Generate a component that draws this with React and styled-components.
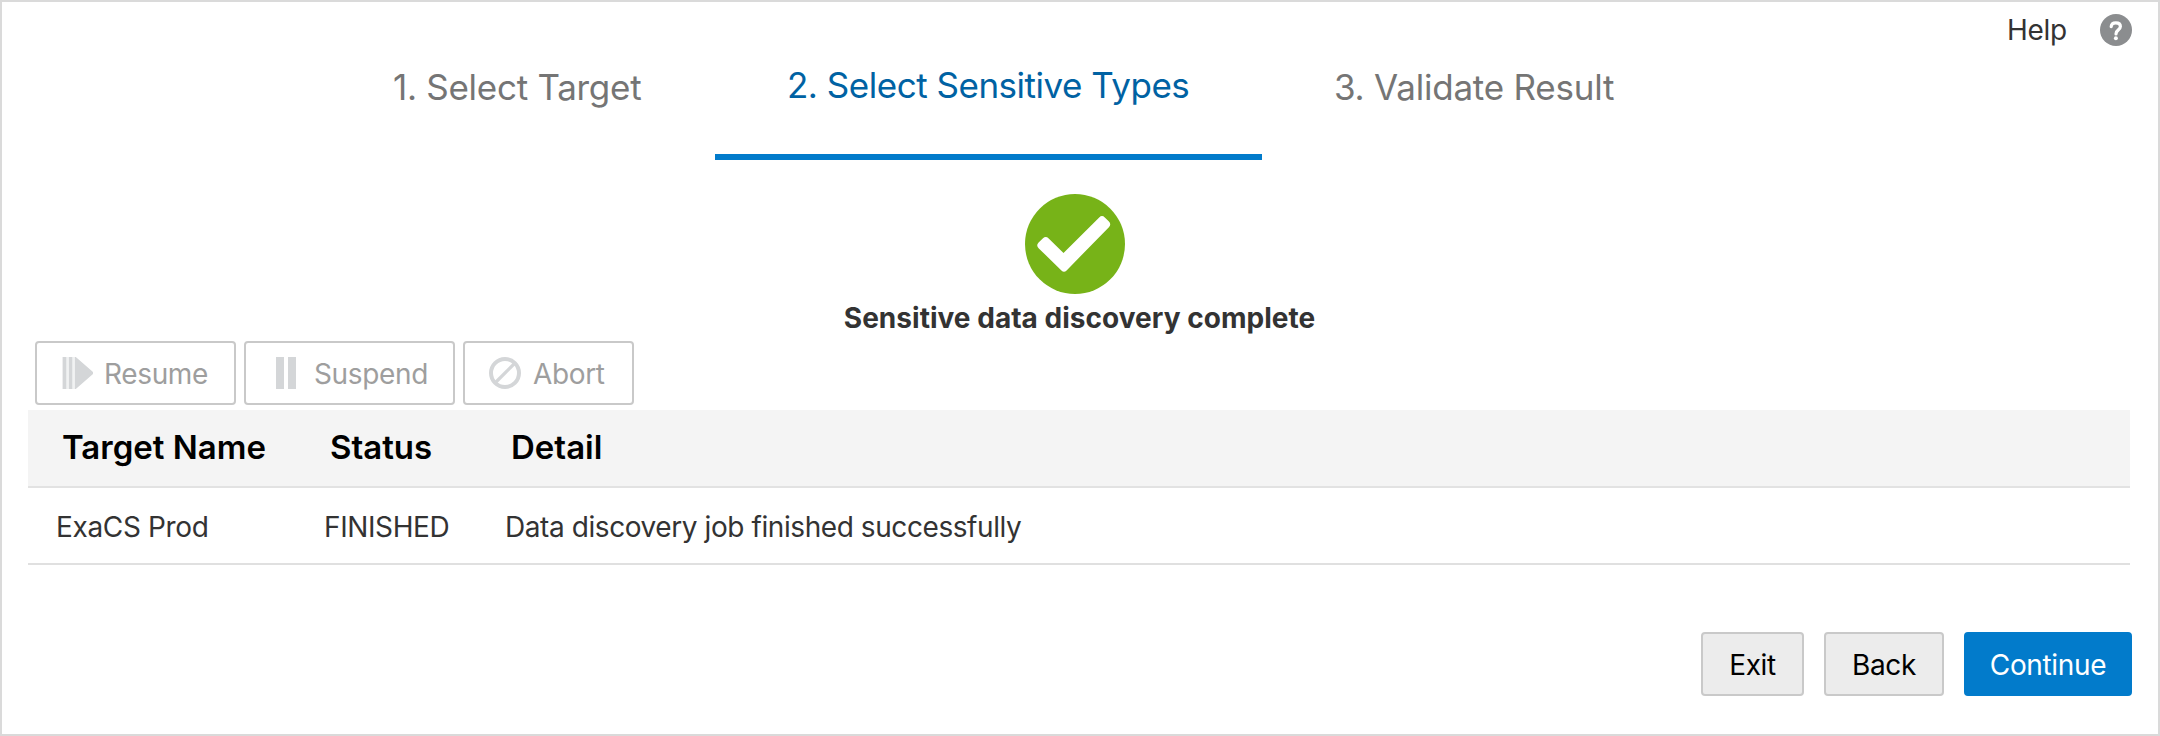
import React from 'react';
import styled, { createGlobalStyle } from 'styled-components';

const GlobalStyle = createGlobalStyle`
  *, *::before, *::after { box-sizing: border-box; }
  body { margin: 0; background: #fff; }
  button { font: inherit; margin: 0; }
`;

const Frame = styled.main`
  width: 2160px;
  height: 736px;
  border: 2px solid #dadada;
  background: #fff;
  color: #333;
  font: 400 28px/32px Inter, 'Liberation Sans', sans-serif;
  white-space: nowrap;
`;

const TopBar = styled.header`
  display: flex;
  justify-content: flex-end;
  gap: 33px;
  padding: 12px 26px 0 0;
`;

const HelpLabel = styled.span`
  letter-spacing: -0.25px;
`;

const Icon = styled.svg`
  display: block;
  flex: none;
  overflow: visible;
`;

const Steps = styled.nav`
  display: flex;
  height: 114px;
  padding-left: 319px;
`;

const Step = styled.div`
  width: ${(p) => p.$width}px;
  padding: ${(p) => (p.$active ? 18 : 20)}px 0 0 72px;
  border-bottom: 6px solid ${(p) => (p.$active ? '#027bcb' : 'transparent')};
  color: ${(p) => (p.$active ? '#0062a3' : '#757575')};
  font-size: 35px;
  line-height: 42px;
  letter-spacing: ${(p) => p.$tracking}px;
`;

const Outcome = styled.section`
  display: flex;
  flex-direction: column;
  align-items: center;
  gap: 6px;
  padding-top: 34px;
`;

const OutcomeIcon = styled(Icon)`
  margin-right: 10px;
`;

const OutcomeText = styled.strong`
  font-weight: 700;
  line-height: 36px;
  letter-spacing: 0.03px;
  padding-right: 1px;
`;

const Toolbar = styled.div`
  display: flex;
  gap: 8px;
  padding: 5px 0 5px 33px;
`;

const ToolButton = styled.button`
  display: flex;
  align-items: center;
  gap: 12px;
  width: ${(p) => p.$width}px;
  height: 64px;
  padding: 0 0 0 24px;
  border: 2px solid #c9c9c9;
  border-radius: 4px;
  background: #fff;
  color: #9e9e9e;
  letter-spacing: -0.35px;
`;

const ToolLabel = styled.span`
  padding-top: 2px;
`;

const Table = styled.table`
  width: 2102px;
  margin-left: 26px;
  border-spacing: 0;
  table-layout: fixed;
  text-align: left;
`;

const HeadCell = styled.th`
  width: ${(p) => p.$width};
  height: 78px;
  padding: 1px 0 2px 34px;
  border-bottom: 2px solid #e2e2e2;
  background: #f4f4f4;
  color: #000;
  font-size: 33px;
  font-weight: 600;
  line-height: 73px;
`;

const Cell = styled.td`
  height: 77px;
  padding: 3px 0 0 28px;
  border-bottom: 2px solid #e0e0e0;
  line-height: 72px;
  letter-spacing: ${(p) => p.$tracking}px;
`;

const Footer = styled.footer`
  display: flex;
  justify-content: flex-end;
  gap: 20px;
  padding: 67px 26px 0 0;
`;

const ActionButton = styled.button`
  width: ${(p) => p.$width}px;
  height: 64px;
  padding: 2px 0 0;
  border: 2px solid ${(p) => (p.$primary ? '#027bcb' : '#c9c9c9')};
  border-radius: 4px;
  background: ${(p) => (p.$primary ? '#027bcb' : '#ececec')};
  color: ${(p) => (p.$primary ? '#fff' : '#000')};
  letter-spacing: -0.35px;
`;

const HelpIcon = () => (
  <Icon width="32" height="32" viewBox="0 0 32 32">
    <circle cx="16" cy="16" r="16" fill="#8b8d8f" />
    <path d="M11.2 12.6C11.4 10.2 13.2 8.9 15.8 8.9C18.5 8.9 20.4 10.3 20.4 12.6C20.4 14.3 19.5 15.1 18.1 16.1C16.7 17.1 16 17.9 16 19.9" fill="none" stroke="#fff" strokeWidth="3.2" strokeLinecap="round" />
    <circle cx="15.9" cy="24.3" r="2" fill="#fff" />
  </Icon>
);

const CheckIcon = () => (
  <OutcomeIcon width="100" height="100" viewBox="0 0 100 100">
    <circle cx="50" cy="50" r="50" fill="#77b318" />
    <path d="M18 44.3Q20.7 41.7 23.7 44.4L38.5 59L74.2 23.4Q77 20.8 79.8 23.4L83.7 27.2Q86.7 30.2 83.9 33.2L41.6 76.4Q39 79 36.4 76.4L13.6 54.2Q10.8 51.2 13.6 48.4Z" fill="#fff" />
  </OutcomeIcon>
);

const ResumeIcon = () => (
  <Icon width="31" height="32" viewBox="0 0 31 32">
    <path d="M1.6 0h4v32h-4zM7.6 0h4v32h-4zM13.6 0h1.2L32 15v2L14.8 32h-1.2z" fill="#d4d6d8" />
    <path d="M5.6 0h2v32h-2zM11.6 0h2v32h-2z" fill="#f1f2f2" />
  </Icon>
);

const SuspendIcon = () => (
  <Icon width="32" height="32" viewBox="0 0 32 32">
    <path d="M6 0h8v32h-8zM18 0h8v32h-8z" fill="#d4d6d8" />
  </Icon>
);

const AbortIcon = () => (
  <Icon width="32" height="32" viewBox="0 0 32 32" fill="none" stroke="#d4d6d8">
    <circle cx="16" cy="16" r="14" strokeWidth="4" />
    <path d="M6.5 25.5L25.5 6.5" strokeWidth="3.2" />
  </Icon>
);

const steps = [
  { label: '1. Select Target', width: 394, tracking: -0.28 },
  { label: '2. Select Sensitive Types', width: 547, tracking: -0.48, active: true },
  { label: '3. Validate Result', width: 424, tracking: -0.22 },
];

const tools = [
  { label: 'Resume', width: 201, Glyph: ResumeIcon },
  { label: 'Suspend', width: 211, Glyph: SuspendIcon },
  { label: 'Abort', width: 171, Glyph: AbortIcon },
];

export default function App() {
  return (
    <Frame>
      <GlobalStyle />
      <TopBar>
        <HelpLabel>Help</HelpLabel>
        <HelpIcon />
      </TopBar>
      <Steps>
        {steps.map((s) => (
          <Step key={s.label} $width={s.width} $tracking={s.tracking} $active={s.active}>
            {s.label}
          </Step>
        ))}
      </Steps>
      <Outcome>
        <CheckIcon />
        <OutcomeText>Sensitive data discovery complete</OutcomeText>
      </Outcome>
      <Toolbar>
        {tools.map(({ label, width, Glyph }) => (
          <ToolButton key={label} $width={width} disabled>
            <Glyph />
            <ToolLabel>{label}</ToolLabel>
          </ToolButton>
        ))}
      </Toolbar>
      <Table>
        <thead>
          <tr>
            <HeadCell $width="268px">Target Name</HeadCell>
            <HeadCell $width="181px">Status</HeadCell>
            <HeadCell $width="auto">Detail</HeadCell>
          </tr>
        </thead>
        <tbody>
          <tr>
            <Cell $tracking={-0.35}>ExaCS Prod</Cell>
            <Cell $tracking={-0.4}>FINISHED</Cell>
            <Cell $tracking={-0.42}>Data discovery job finished successfully</Cell>
          </tr>
        </tbody>
      </Table>
      <Footer>
        <ActionButton $width={103}>Exit</ActionButton>
        <ActionButton $width={120}>Back</ActionButton>
        <ActionButton $width={168} $primary>Continue</ActionButton>
      </Footer>
    </Frame>
  );
}
